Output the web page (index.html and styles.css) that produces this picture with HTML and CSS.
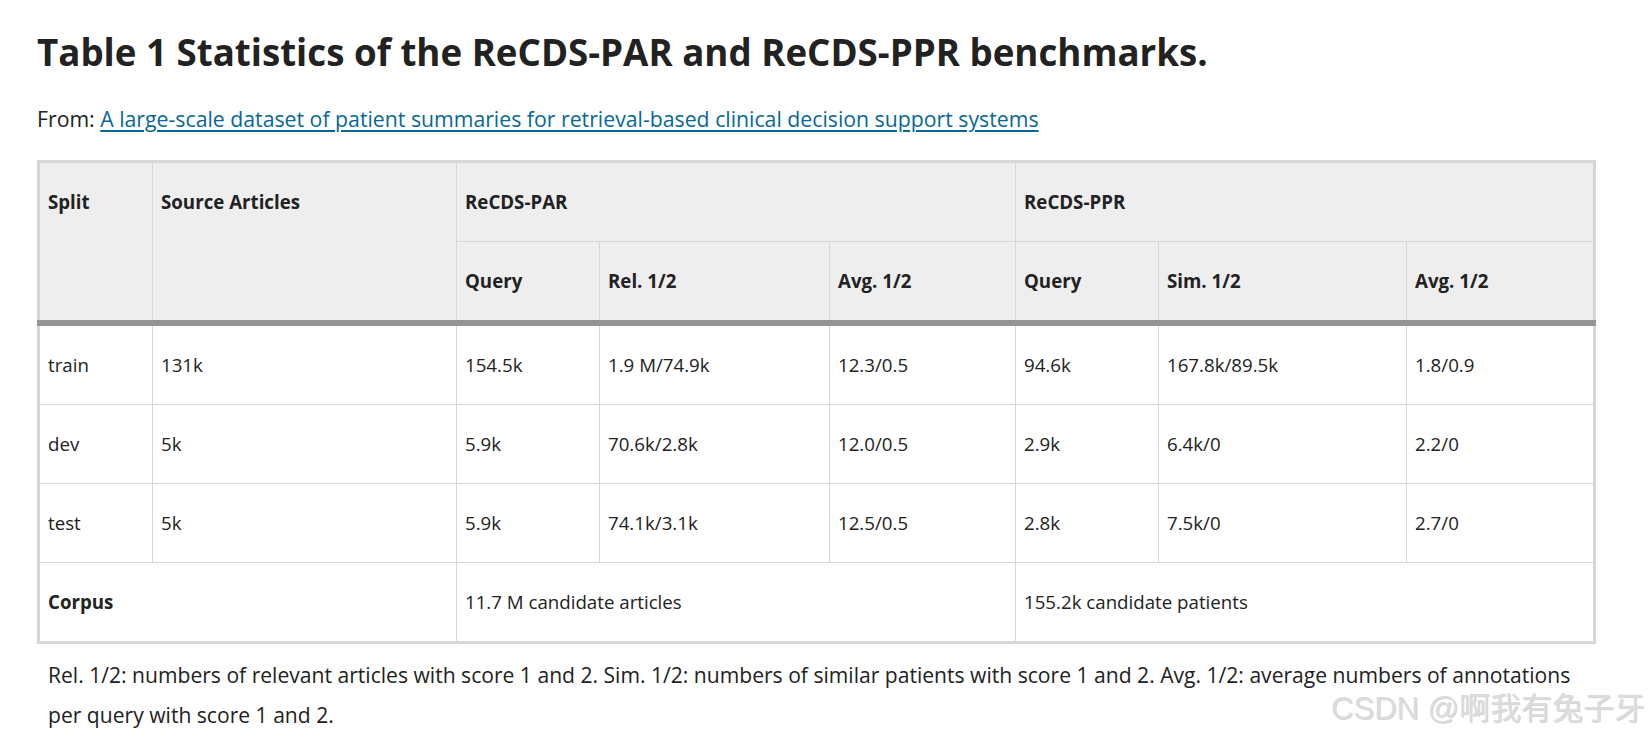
FILE: index.html
```html
<!DOCTYPE html>
<html lang="en">
<head>
<meta charset="utf-8">
<title>Table 1 Statistics of the ReCDS-PAR and ReCDS-PPR benchmarks.</title>
<link rel="stylesheet" href="styles.css">
</head>
<body>
<main class="page">
  <h1 class="title">Table 1 Statistics of the ReCDS-PAR and ReCDS-PPR benchmarks.</h1>
  <p class="from">From: <a href="#" class="from-link">A large-scale dataset of patient summaries for retrieval-based clinical decision support systems</a></p>
  <table class="data">
    <colgroup>
      <col class="c1"><col class="c2"><col class="c3"><col class="c4"><col class="c5"><col class="c6"><col class="c7"><col class="c8">
    </colgroup>
    <thead>
      <tr>
        <th rowspan="2" class="top">Split</th>
        <th rowspan="2" class="top">Source Articles</th>
        <th colspan="3">ReCDS-PAR</th>
        <th colspan="3">ReCDS-PPR</th>
      </tr>
      <tr>
        <th>Query</th>
        <th>Rel. 1/2</th>
        <th>Avg. 1/2</th>
        <th>Query</th>
        <th>Sim. 1/2</th>
        <th>Avg. 1/2</th>
      </tr>
    </thead>
    <tbody>
      <tr><td>train</td><td>131k</td><td>154.5k</td><td>1.9 M/74.9k</td><td>12.3/0.5</td><td>94.6k</td><td>167.8k/89.5k</td><td>1.8/0.9</td></tr>
      <tr><td>dev</td><td>5k</td><td>5.9k</td><td>70.6k/2.8k</td><td>12.0/0.5</td><td>2.9k</td><td>6.4k/0</td><td>2.2/0</td></tr>
      <tr><td>test</td><td>5k</td><td>5.9k</td><td>74.1k/3.1k</td><td>12.5/0.5</td><td>2.8k</td><td>7.5k/0</td><td>2.7/0</td></tr>
      <tr><td colspan="2" class="bold">Corpus</td><td colspan="3">11.7 M candidate articles</td><td colspan="3">155.2k candidate patients</td></tr>
    </tbody>
  </table>
  <p class="note">Rel. 1/2: numbers of relevant articles with score 1 and 2. Sim. 1/2: numbers of similar patients with score 1 and 2. Avg. 1/2: average numbers of annotations per query with score 1 and 2.</p>
</main>
<div class="watermark">CSDN @啊我有兔子牙</div>
</body>
</html>
```
FILE: styles.css
```css
html, body {
  margin: 0;
  padding: 0;
  background: #ffffff;
}
body {
  font-family: "Open Sans", "Noto Sans", "Liberation Sans", sans-serif;
  color: #222222;
  position: relative;
  min-height: 737px;
  overflow: hidden;
}
.page {
  padding: 0 0 0 37px;
}
.title {
  margin: 0;
  padding-top: 28px;
  font-size: 36.7px;
  line-height: 48px;
  font-weight: 700;
  color: #222222;
}
.from {
  margin: 0;
  padding-top: 29px;
  font-size: 21.25px;
  line-height: 28px;
}
.from-link {
  color: #07679a;
  text-decoration: underline;
  text-underline-offset: 3px;
}
.data {
  margin-top: 27px;
  width: 1559px;
  table-layout: fixed;
  border-collapse: collapse;
  border: 3px solid #d6d6d6;
  font-size: 18.7px;
  line-height: 28px;
}
.c1 { width: 114px; }
.c2 { width: 304px; }
.c3 { width: 143px; }
.c4 { width: 230px; }
.c5 { width: 186px; }
.c6 { width: 143px; }
.c7 { width: 248px; }
.c8 { width: 188px; }
.data th,
.data td {
  border: 1px solid #d6d6d6;
  padding: 25px 8px;
  text-align: left;
  vertical-align: middle;
  white-space: nowrap;
}
.data th {
  background: #eeeeee;
  font-weight: 700;
}
.data th.top {
  vertical-align: top;
}
.data thead tr:last-child th,
.data thead th.top {
  border-bottom: 6px solid #949494;
}
.data .bold {
  font-weight: 700;
}
.note {
  margin: 0;
  width: 1546px;
  padding: 11px 0 0 11px;
  font-size: 21.1px;
  line-height: 40px;
}
.watermark {
  position: absolute;
  right: 3px;
  bottom: 13px;
  font-family: "Liberation Sans", "Noto Sans CJK SC", sans-serif;
  font-size: 31px;
  line-height: 31px;
  font-weight: 400;
  color: #dcdcdc;
  text-shadow: 1px 1px 0 rgba(0, 0, 0, 0.18);
}
```
